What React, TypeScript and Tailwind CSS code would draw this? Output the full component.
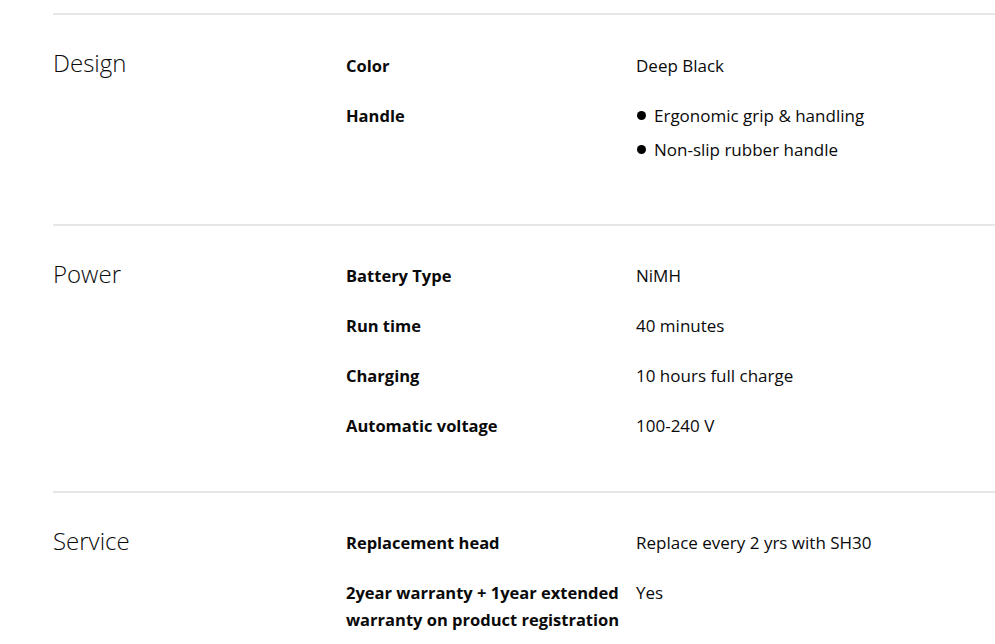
import React from "react";

type Spec = { label: string; value: string | string[] };
type Section = { title: string; specs: Spec[] };

const sections: Section[] = [
  {
    title: "Design",
    specs: [
      { label: "Color", value: "Deep Black" },
      { label: "Handle", value: ["Ergonomic grip & handling", "Non-slip rubber handle"] },
    ],
  },
  {
    title: "Power",
    specs: [
      { label: "Battery Type", value: "NiMH" },
      { label: "Run time", value: "40 minutes" },
      { label: "Charging", value: "10 hours full charge" },
      { label: "Automatic voltage", value: "100-240 V" },
    ],
  },
  {
    title: "Service",
    specs: [
      { label: "Replacement head", value: "Replace every 2 yrs with SH30" },
      { label: "2year warranty + 1year extended warranty on product registration", value: "Yes" },
    ],
  },
];

function SpecRow({ spec }: { spec: Spec }) {
  return (
    <div className="flex mb-[23px]">
      <div className="w-[290px] shrink-0 pr-[10px] font-bold text-[16.5px] leading-[27px]">{spec.label}</div>
      <div className="flex-1 text-[17px] leading-[27px]">
        {Array.isArray(spec.value) ? (
          <ul className="mb-[9px]">
            {spec.value.map((v, i) => (
              <li key={i} className="flex items-center gap-[8px] mb-[7px] last:mb-0">
                <span className="w-[9px] h-[9px] rounded-full bg-black shrink-0 ml-[1px]" />
                <span>{v}</span>
              </li>
            ))}
          </ul>
        ) : (
          spec.value
        )}
      </div>
    </div>
  );
}

export default function App() {
  return (
    <div
      className="bg-white min-h-screen pt-[13px] text-[#0a0a0a]"
      style={{ fontFamily: '"Open Sans", "Noto Sans", sans-serif' }}
    >
      <div className="ml-[53px]">
        {sections.map((s, idx) => (
          <section key={s.title} className="border-t-2 border-[#e6e6e6] flex pb-[29px]">
            <h2
              className={
                idx === 0
                  ? "w-[293px] shrink-0 pt-[32px] text-[24px] leading-[32px] font-light"
                  : "w-[293px] shrink-0 pt-[32px] text-[24px] leading-[32px] font-light"
              }
            >
              {s.title}
            </h2>
            <div className={idx === 0 ? "flex-1 pt-[37px]" : "flex-1 pt-[36px]"}>
              {s.specs.map((sp) => (
                <SpecRow key={sp.label} spec={sp} />
              ))}
            </div>
          </section>
        ))}
      </div>
    </div>
  );
}
